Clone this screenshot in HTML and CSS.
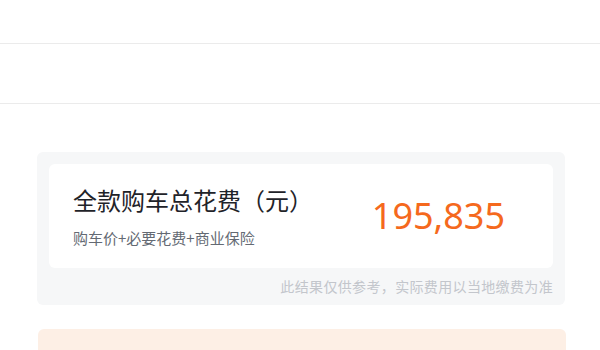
FILE: index.html
```html
<!DOCTYPE html>
<html lang="zh-CN">
<head>
  <meta charset="UTF-8">
  <title>全款购车总花费</title>
  <link rel="stylesheet" href="styles.css">
</head>
<body>
<div class="top-bar"></div>
<div class="tab-row"></div>

<div class="summary-box">
  <div class="summary-card">
    <div class="summary-text">
      <div class="summary-title">全款购车总花费（元）</div>
      <div class="summary-desc">购车价+必要花费+商业保险</div>
    </div>
    <div class="summary-total">195,835</div>
  </div>
  <div class="summary-note">此结果仅供参考，实际费用以当地缴费为准</div>
</div>

<div class="tip-box"></div>
</body>
</html>
```

FILE: styles.css
```css
body {
  margin: 0;
  background-color: #ffffff;
  font-family: "Noto Sans", "Noto Sans CJK SC", sans-serif;
  color: #1f2329;
}

.top-bar {
  height: 43px;
  border-bottom: 1px solid #ebebeb;
}

.tab-row {
  height: 59px;
  border-bottom: 1px solid #ebebeb;
}

.summary-box {
  width: 504px;
  margin: 48px 0 0 37px;
  padding: 12px 12px 8px;
  background: #f6f7f8;
  border-radius: 6px;
}

.summary-card {
  display: flex;
  align-items: center;
  justify-content: space-between;
  padding: 20px 48px 20px 24px;
  background: #ffffff;
  border-radius: 6px;
}

.summary-title {
  font-size: 24px;
  line-height: 34px;
  color: #1f2329;
}

.summary-desc {
  margin-top: 10px;
  font-family: "Noto Sans CJK SC", sans-serif;
  font-size: 15px;
  line-height: 20px;
  color: #646a73;
}

.summary-total {
  font-size: 36px;
  line-height: 44px;
  color: #f5691d;
}

.summary-note {
  margin-top: 9px;
  text-align: right;
  font-size: 14px;
  letter-spacing: 0.35px;
  line-height: 20px;
  color: #c3c6cc;
}

.tip-box {
  width: 528px;
  height: 40px;
  margin: 24px 0 0 38px;
  background: #fdefe5;
  border-radius: 6px;
}
```
